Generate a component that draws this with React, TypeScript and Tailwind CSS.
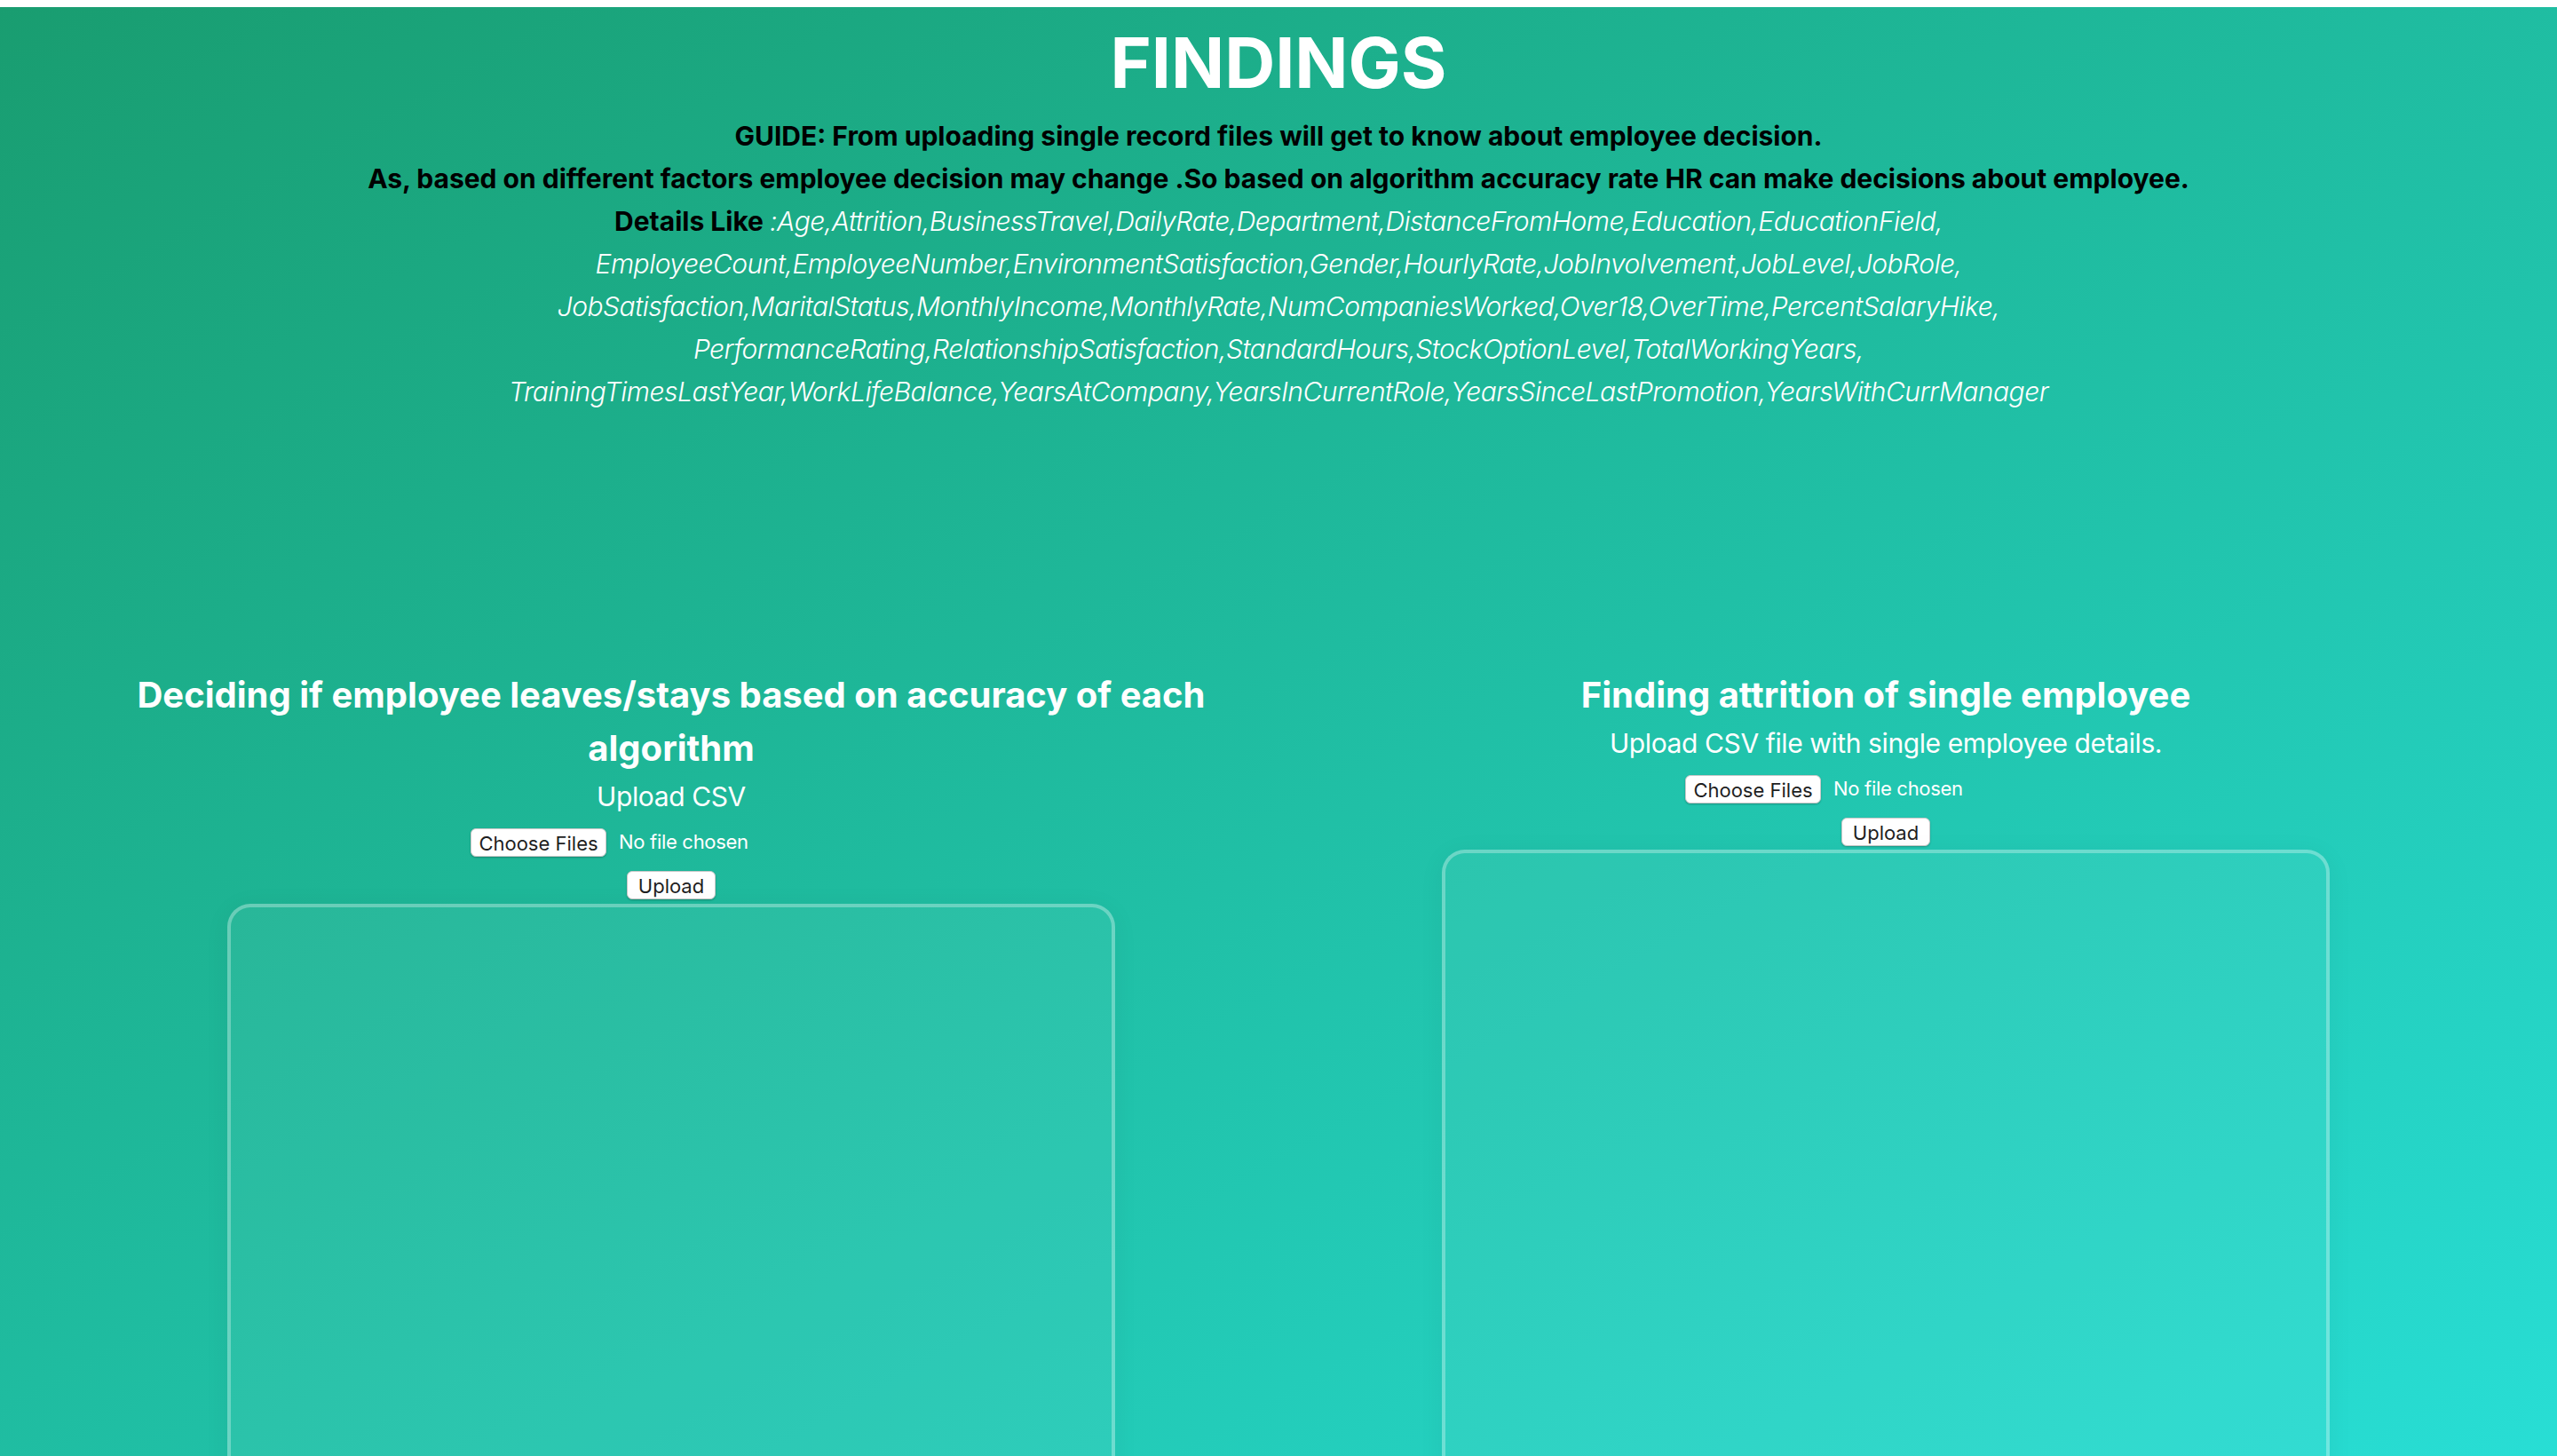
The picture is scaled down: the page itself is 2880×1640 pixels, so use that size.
import React from 'react';

const details = [
  'EmployeeCount,EmployeeNumber,EnvironmentSatisfaction,Gender,HourlyRate,JobInvolvement,JobLevel,JobRole,',
  'JobSatisfaction,MaritalStatus,MonthlyIncome,MonthlyRate,NumCompaniesWorked,Over18,OverTime,PercentSalaryHike,',
  'PerformanceRating,RelationshipSatisfaction,StandardHours,StockOptionLevel,TotalWorkingYears,',
  'TrainingTimesLastYear,WorkLifeBalance,YearsAtCompany,YearsInCurrentRole,YearsSinceLastPromotion,YearsWithCurrManager',
];

const FilePicker = () => (
  <div className="flex w-[452px] items-center gap-[14px]">
    <button className="h-[32px] w-[153px] rounded-[6px] border border-[#c9c9c9] bg-white text-[22px] text-[#1f1f1f] shadow-[0_1px_2px_rgba(0,0,0,0.25)]">
      Choose Files
    </button>
    <span className="text-[22px] tracking-[-0.3px] text-white">No file chosen</span>
  </div>
);

const UploadBtn = () => (
  <button className="h-[32px] w-[100px] rounded-[6px] border border-[#c9c9c9] bg-white text-[22px] text-[#1f1f1f] shadow-[0_1px_2px_rgba(0,0,0,0.25)]">
    Upload
  </button>
);

const GlassBox = () => (
  <div className="h-[720px] w-[1000px] rounded-[26px] border-4 border-white/30 bg-white/5 shadow-[0_4px_30px_rgba(0,0,0,0.05)]" />
);

export default function App() {
  return (
    <div className="bg-white pt-2 font-['Inter',sans-serif]">
      <div className="h-[1632px] overflow-hidden bg-linear-to-br from-[#199d70] to-[#28ded5]">
        <h1 className="pt-[23px] text-center text-[79px] font-bold leading-none text-white">FINDINGS</h1>

        <div className="mt-[19px] text-center text-[30px] leading-[48px]">
          <p className="font-bold text-black">GUIDE: From uploading single record files will get to know about employee decision.</p>
          <p className="font-bold text-black">
            As, based on different factors employee decision may change .So based on algorithm accuracy rate HR can make decisions about employee.
          </p>
          <p className="font-light italic tracking-[-0.5px] text-white">
            <span className="font-bold not-italic tracking-normal text-black">Details Like </span>
            :Age,Attrition,BusinessTravel,DailyRate,Department,DistanceFromHome,Education,EducationField,
            {details.map((line) => (
              <React.Fragment key={line}>
                <br />
                {line}
              </React.Fragment>
            ))}
          </p>
        </div>

        <div className="mt-[288px] grid grid-cols-2 items-start px-[72px] text-white">
          <div className="flex flex-col items-center">
            <h2 className="max-w-[1240px] text-center text-[40px] font-bold leading-[60px]">
              Deciding if employee leaves/stays based on accuracy of each algorithm
            </h2>
            <p className="text-[30px] leading-[48px] tracking-[-0.4px]">Upload CSV</p>
            <div className="mt-[11px]">
              <FilePicker />
            </div>
            <div className="mt-[16px]">
              <UploadBtn />
            </div>
            <div className="mt-[5px]">
              <GlassBox />
            </div>
          </div>

          <div className="flex flex-col items-center">
            <h2 className="text-center text-[40px] font-bold leading-[60px]">Finding attrition of single employee</h2>
            <p className="text-[30px] leading-[48px] tracking-[-0.4px]">Upload CSV file with single employee details.</p>
            <div className="mt-[11px]">
              <FilePicker />
            </div>
            <div className="mt-[16px]">
              <UploadBtn />
            </div>
            <div className="mt-[4px]">
              <GlassBox />
            </div>
          </div>
        </div>
      </div>
    </div>
  );
}
